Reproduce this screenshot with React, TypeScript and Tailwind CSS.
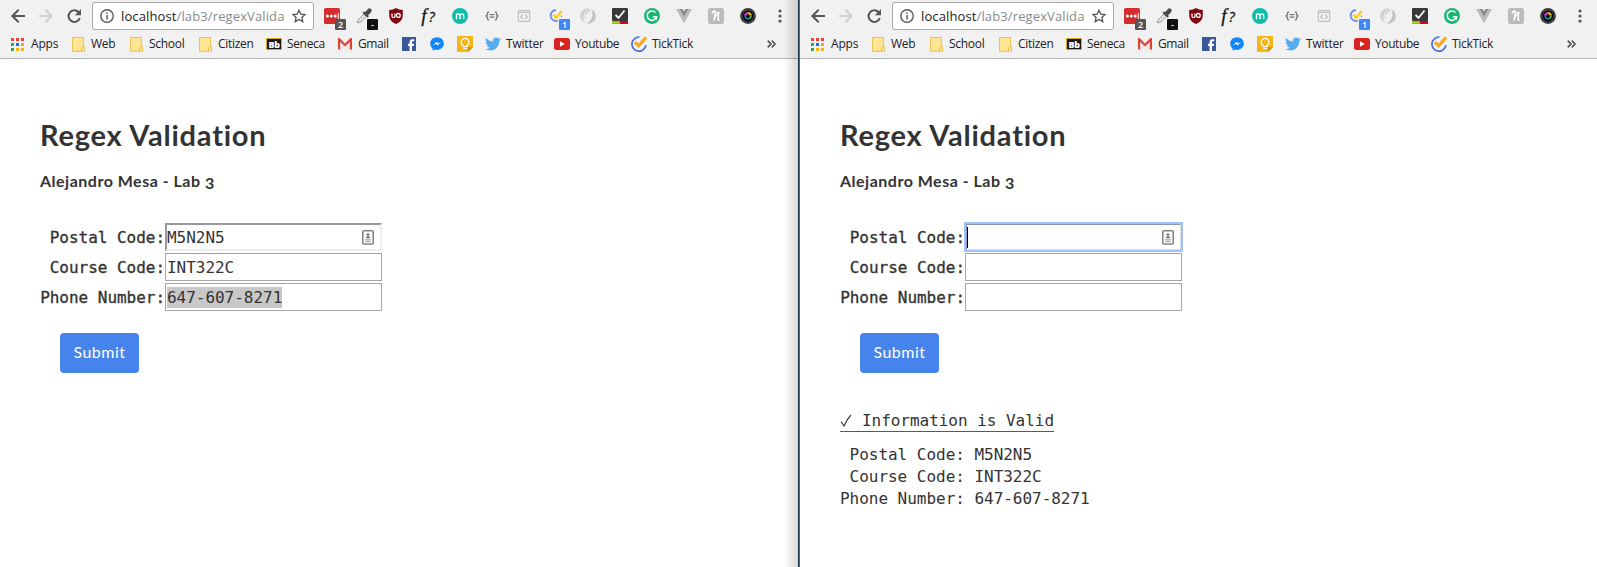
import type { ReactNode } from "react";
import { FaTwitter } from "react-icons/fa";

function BackArrow({ color }: { color: string }) {
  return (
    <svg width="14" height="14" viewBox="0 0 14 14" fill="none" stroke={color} strokeWidth="2">
      <path d="M14 7H1.8M7.6 .8L1.4 7l6.2 6.2" />
    </svg>
  );
}

function TickTickIcon() {
  return (
    <svg width="16" height="16" viewBox="0 0 16 16" fill="none">
      <path d="M8.5 1.2a7 7 0 1 0 6.4 8" stroke="#4c72e0" strokeWidth="1.8" />
      <path d="M4 6.2l3.6 3.6L15 1.6" stroke="#ffa414" strokeWidth="3" />
    </svg>
  );
}

function Badge({ text, color }: { text: string; color: string }) {
  return (
    <span className={`absolute left-[11px] top-[11px] flex h-[11px] w-[11px] items-center justify-center rounded-[1px] font-['Open_Sans',sans-serif] text-[9px] font-semibold leading-none text-white ${color}`}>
      {text}
    </span>
  );
}

function Ext({ children }: { children: ReactNode }) {
  return <span className="relative mr-4 flex h-4 w-4 shrink-0 items-center justify-center">{children}</span>;
}

function Extensions() {
  return (
    <>
      <Ext>
        <svg width="16" height="16">
          <rect width="16" height="16" rx="1.5" fill="#d32d2f" />
          <g fill="#fff"><circle cx="3.4" cy="8" r="1.5" /><circle cx="7.3" cy="8" r="1.5" /><circle cx="11.2" cy="8" r="1.5" /><rect x="13.7" y="5.2" width="1" height="5.6" /></g>
        </svg>
        <Badge text="2" color="bg-[#555]" />
      </Ext>
      <Ext>
        <svg width="16" height="16" fill="none">
          <path d="M1.2 14.8l1-3L9 5l2.4 2.4-6.8 6.8z" fill="#e2e2e2" stroke="#999" strokeWidth="1" />
          <path d="M7.2 4l5 5" stroke="#444" strokeWidth="2" />
          <path d="M10.6 5.7l2.8-3" stroke="#484848" strokeWidth="4.4" strokeLinecap="round" />
        </svg>
        <Badge text="-" color="bg-[#111]" />
      </Ext>
      <Ext>
        <svg width="16" height="16">
          <path d="M8 0c2 1.3 4.3 1.9 6.8 2v5c0 4.5-2.4 7-6.8 9-4.4-2-6.8-4.5-6.8-9V2C3.700 1.9 6 1.3 8 0z" fill="#800610" />
          <path d="M4 5.4v2.800q0 1.300 1.500 1.300T7 8.200V5.400" fill="none" stroke="#fff" strokeWidth="1.2" />
          <circle cx="10.3" cy="7.4" r="1.9" fill="none" stroke="#fff" strokeWidth="1.3" />
        </svg>
      </Ext>
      <Ext>
        <span className="whitespace-nowrap font-['Liberation_Serif',serif] text-[19px] italic leading-4 text-[#111] [-webkit-text-stroke:0.3px_#111]">
          f<span className="ml-0.5 font-['Open_Sans',sans-serif] text-[14px]">?</span>
        </span>
      </Ext>
      <Ext>
        <svg width="16" height="16" fill="none">
          <circle cx="8" cy="8" r="8" fill="#12bda8" />
          <path d="M4.5 11.200V5.400M4.500 7.800q0-2 1.800-2t1.800 2v3.400M8.100 7.800q0-2 1.800-2t1.800 2v3.400" stroke="#fff" strokeWidth="1.300" />
        </svg>
      </Ext>
      <Ext>
        <svg width="16" height="16" fill="none" stroke="#777" strokeWidth="1.3">
          <path d="M5 4q-1.600 0-1.600 1.400V7L2 8l1.400 1v1.600Q3.400 12 5 12M11 4q1.600 0 1.600 1.400V7L14 8l-1.400 1v1.600q0 1.400-1.600 1.400M5.500 6.700h5M5.500 9.200h5" />
        </svg>
      </Ext>
      <Ext>
        <svg width="16" height="16" fill="none" stroke="#c0c0c0" strokeWidth="1.2">
          <rect x="2.3" y="2.6" width="11.4" height="10.8" rx="1" />
          <path d="M2.300 4.300h11.400M6.900 6.500L4.800 8.700l2.100 2.200M9.100 6.500l2.100 2.200-2.100 2.200" />
        </svg>
      </Ext>
      <Ext>
        <svg width="16" height="16" fill="none">
          <path d="M8 2.200a5.400 5.400 0 1 0 2 10.400" stroke="#6487e2" strokeWidth="1.700" />
          <path d="M5 6.600l3 3L13.800 3" stroke="#ffcc18" strokeWidth="2.500" />
          <circle cx="13.500" cy="8.300" r=".8" fill="#6487e2" />
        </svg>
        <Badge text="1" color="bg-[#4285f4]" />
      </Ext>
      <Ext>
        <svg width="16" height="16">
          <path d="M9.600.3C4-.6-.2 3.500.2 8.300c.3 3.300 2.400 5.800 5.600 6.600C3.600 12.800 3 10.500 3.800 7.600 4.700 4.200 6.800 2 9.600.3z" fill="#d0d0d0" />
          <path d="M6.400 15.700c5.600.9 9.800-3.200 9.400-8-.3-3.300-2.400-5.800-5.600-6.600 2.200 2.100 2.800 4.400 2 7.300-.9 3.400-3 5.600-5.800 7.300z" fill="#c4c4c4" />
          <path d="M9.400 1.500C5.500 4 4.200 8 5.600 12c-.8-4 .6-7.300 4.400-9z" fill="#bdbdbd" />
        </svg>
      </Ext>
      <Ext>
        <svg width="16" height="16" fill="none">
          <rect width="16" height="13" rx="1" fill="#383838" />
          <path d="M0 13h8v3H0z" fill="#9fc713" /><path d="M8 13h8v3H8z" fill="#c50c1a" />
          <path d="M3.500 7l3 3 6-7.500" stroke="#fff" strokeWidth="1.800" />
        </svg>
      </Ext>
      <Ext>
        <svg width="16" height="16" fill="none">
          <circle cx="8" cy="8" r="8" fill="#18b573" />
          <path d="M11.500 4.600A4.700 4.700 0 1 0 12.500 8.700H8.800" stroke="#fff" strokeWidth="1.600" />
          <path d="M12.300 8.700v3" stroke="#fff" strokeWidth="1.200" />
        </svg>
      </Ext>
      <Ext>
        <svg width="16" height="16">
          <path d="M0 1h3.600L8 8.700 12.400 1H16L8 15z" fill="#b9b9b9" />
          <path d="M3.600 1H6.500L8 3.600 9.500 1h2.900L8 8.700z" fill="#898989" />
        </svg>
      </Ext>
      <Ext>
        <svg width="16" height="16" fill="none">
          <rect width="16" height="16" rx="2.500" fill="#bcbcbc" />
          <path d="M4.200 5.600Q4.800 3 6.600 3q1 0 .8 1.600L6 12.600M6.700 9.300Q7.900 7 9.400 7q1.300 0 1 1.500l-.5 2.600q-.2 1.400 1.900.8M8.600 5.200h3M10.600 3.600L10 6" stroke="#fff" strokeWidth="1.500" />
        </svg>
      </Ext>
      <Ext>
        <svg width="16" height="16" fill="none">
          <circle cx="8" cy="8" r="7.900" fill="#3a3d40" />
          <circle cx="8" cy="8" r="5.400" fill="#050505" />
          <path d="M5.200 7.800A2.900 2.900 0 0 1 8 5.200" stroke="#d638cb" strokeWidth="2.200" />
          <path d="M8 5.200a2.900 2.900 0 0 1 2.800 2.300" stroke="#f2ad16" strokeWidth="2.200" />
          <path d="M10.800 7.500A2.900 2.900 0 0 1 9 10.700" stroke="#39b54a" strokeWidth="1.800" />
          <path d="M9 10.700A2.900 2.900 0 0 1 5.200 8" stroke="#1696df" strokeWidth="1.400" />
        </svg>
      </Ext>
    </>
  );
}

function Folder() {
  return (
    <svg width="13" height="15">
      <path d="M.5.500h11v9h1v4.800H.5z" fill="#ffe592" stroke="#e6c558" />
      <path d="M9.600 14V10.600q0-1 1.500-1" fill="none" stroke="#e6c558" />
    </svg>
  );
}

function Mark({ width, gap, tracking, icon, label }: { width: string; gap: string; tracking?: string; icon: ReactNode; label?: string }) {
  return (
    <div className={`flex h-5 shrink-0 items-center whitespace-nowrap ${width} ${gap} ${tracking ?? ""}`}>
      {icon}
      {label && <span>{label}</span>}
    </div>
  );
}

function Bookmarks() {
  return (
    <nav className="flex h-6 items-center pl-[11px] font-['Open_Sans',sans-serif] text-[12px] leading-5 text-[#222]">
      <Mark width="w-[61px]" gap="gap-[7px]" tracking="tracking-[-0.2px]" label="Apps" icon={
        <svg width="13" height="13">
          <path d="M0 0h3v3H0zM5 0h3v3H5zM10 0h3v3h-3z" fill="#ea4335" />
          <path d="M0 5h3v3H0zM0 10h3v3H0z" fill="#2fa35b" />
          <path d="M5 5h3v3H5z" fill="#1a73e8" />
          <path d="M10 5h3v3h-3zM5 10h3v3H5zM10 10h3v3h-3z" fill="#fbad08" />
        </svg>
      } />
      <Mark width="w-[58px]" gap="gap-[6px]" tracking="tracking-[-0.3px]" icon={<Folder />} label="Web" />
      <Mark width="w-[69px]" gap="gap-[6px]" tracking="tracking-[-0.3px]" icon={<Folder />} label="School" />
      <Mark width="w-[67px]" gap="gap-[6px]" tracking="tracking-[-0.3px]" icon={<Folder />} label="Citizen" />
      <Mark width="w-[72px]" gap="gap-[5px]" tracking="tracking-[-0.35px]" label="Seneca" icon={
        <span className="flex h-3 w-4 items-center justify-center border border-[#dfa91f] bg-[#161616] text-[9px] font-extrabold leading-none text-white">Bb</span>
      } />
      <Mark width="w-[64px]" gap="gap-[6px]" tracking="tracking-[-0.4px]" label="Gmail" icon={
        <svg width="14" height="12" fill="none">
          <path d="M0 0h14v11.500H0z" fill="#f0eeee" />
          <path d="M2.500 11L7 6.500l4.500 4.500" stroke="#d6d3d3" />
          <path d="M1.100 11.500V1.200L7 7l5.900-5.800v10.300" stroke="#db4437" strokeWidth="2.200" />
        </svg>
      } />
      <Mark width="w-[28px]" gap="gap-0" icon={
        <svg width="14" height="14"><path d="M0 0h14v14H0z" fill="#3b5998" /><path d="M7.600 14V8.900H6V6.700h1.600V5.100C7.600 3.200 8.600 2.200 10.500 2.200h1.700v2.100h-1.100c-.9 0-1.100.4-1.100 1.100v1.300h2.100l-.3 2.200H10V14z" fill="#fff" /></svg>
      } />
      <Mark width="w-[27px]" gap="gap-0" icon={
        <svg width="14" height="14"><path d="M7 .2C3.100.2.200 3 .2 6.600c0 2.100.9 3.800 2.400 5v2.200l2.200-1.200c.7.200 1.400.3 2.200.3 3.900 0 6.800-2.700 6.800-6.300S10.900.2 7 .2z" fill="#1185ff" /><path d="M2.900 8.500L6.400 4.800l1.800 1.800 3-1.800-3.500 3.700-1.800-1.700z" fill="#fff" /></svg>
      } />
      <Mark width="w-[28px]" gap="gap-0" icon={
        <svg width="16" height="16" fill="none"><path d="M0 0h16v11l-5 5H0z" fill="#f5b713" /><path d="M16 11h-5v5z" fill="#dc8f00" /><path d="M6 9.600q-2-1.400-2-3.300A4 4 0 0 1 12 6.300Q12 8.200 10 9.600V10.500H6z" stroke="#fff" strokeWidth="1.200" /><path d="M6 12.500h4" stroke="#fff" strokeWidth="1.300" /></svg>
      } />
      <Mark width="w-[69px]" gap="gap-[5px]" tracking="tracking-[-0.2px]" icon={<FaTwitter size={16} color="#55acee" />} label="Twitter" />
      <Mark width="w-[77px]" gap="gap-[5px]" tracking="tracking-[-0.4px]" label="Youtube" icon={
        <svg width="16" height="12"><rect width="16" height="12" rx="2.500" fill="#d92323" /><path d="M6 3.300v5.400L10.700 6z" fill="#fff" /></svg>
      } />
      <Mark width="w-[136px]" gap="gap-[5px]" tracking="tracking-[-0.3px]" icon={<TickTickIcon />} label="TickTick" />
      <svg width="9" height="8" fill="none" stroke="#555" strokeWidth="1.700"><path d="M.7.700L4 4 .7 7.300M4.800.700L8.100 4 4.800 7.300" /></svg>
    </nav>
  );
}

function Toolbar() {
  return (
    <header className="h-[59px] border-b border-[#b3b3b3] bg-[#f1f1f1]">
      <div className="flex h-8 items-center pl-[11px]">
        <div className="flex w-[81px] items-center gap-[14px]">
          <BackArrow color="#555" />
          <span className="rotate-180"><BackArrow color="#d0d0d0" /></span>
          <svg width="15" height="15" viewBox="0 0 15 15" fill="none">
            <path d="M12.800 9.200A5.800 5.800 0 1 1 11.600 3.200" stroke="#555" strokeWidth="2" />
            <path d="M14 0v6.200H7.800z" fill="#555" />
          </svg>
        </div>
        <div className="flex h-[28px] w-[222px] shrink-0 items-center rounded-[3px] border border-[#a8a8a8] bg-white pl-[7px]">
          <svg width="14" height="14" fill="none">
            <circle cx="7" cy="7" r="6.200" stroke="#5a5a5a" strokeWidth="1.400" />
            <path d="M6.300 6h1.500v4.600H6.300zM6.300 3.300h1.500v1.500H6.300z" fill="#5a5a5a" />
          </svg>
          <span className="ml-[7px] w-[171px] whitespace-nowrap font-['Open_Sans',sans-serif] text-[13px] leading-5 tracking-[0.12px] text-[#8a8a8a]">
            <span className="text-[#222]">localhost</span>/lab3/regexValida
          </span>
          <svg width="14" height="14" viewBox="0 0 14 14" fill="none" stroke="#555" strokeWidth="1.300">
            <path d="M7 1.200l1.800 3.900 4.300.4-3.200 2.900.9 4.200L7 10.400l-3.800 2.200.9-4.200L.9 5.500l4.300-.4z" />
          </svg>
        </div>
        <div className="ml-[10px] flex items-center">
          <Extensions />
          <svg width="4" height="14" className="ml-[6px]" fill="#555"><circle cx="2" cy="2" r="1.600" /><circle cx="2" cy="7" r="1.600" /><circle cx="2" cy="12" r="1.600" /></svg>
        </div>
      </div>
      <Bookmarks />
    </header>
  );
}

function ContactIcon() {
  return (
    <svg width="12" height="15" fill="none">
      <rect x=".8" y=".8" width="10.400" height="13.200" rx="1" stroke="#858585" strokeWidth="1.600" />
      <circle cx="6" cy="4.700" r="1.400" fill="#777" />
      <path d="M3.600 8.300q0-2 2.400-2t2.400 2z" fill="#777" />
      <path d="M3.300 9.800h5.400M3.300 11.600h5.400" stroke="#999" />
    </svg>
  );
}

const plainField = "border border-[#a5a5a5]";
const insetField = "border-2 border-t-[#999] border-l-[#999] border-r-[#eee] border-b-[#eee]";
const focusedField = "border-2 border-t-[#8597b4] border-l-[#8597b4] border-r-[#ddd] border-b-[#ddd] outline-2 -outline-offset-1 outline-[#9fc3fa]";

function Row({ label, box, pad, children }: { label: string; box: string; pad: string; children?: ReactNode }) {
  return (
    <div className="flex h-[28px]">
      <label className="w-[125px] whitespace-pre pt-px text-right leading-[28px] [-webkit-text-stroke:0.32px_#333]">{label}</label>
      <div className={`flex w-[217px] items-center bg-white ${box} ${pad}`}>{children}</div>
    </div>
  );
}

function Page({ submitted }: { submitted: boolean }) {
  return (
    <main className="pl-10 pt-[55px] text-[#333]">
      <h1 className="h-[42px] font-['Lato',sans-serif] text-[29px] font-bold leading-[41px] tracking-[0.78px]">Regex Validation</h1>
      <h2 className="mt-[13px] h-6 font-['Lato',sans-serif] text-[16px] font-bold leading-6 tracking-[0.5px]">
        Alejandro Mesa - Lab <span className="inline-block translate-y-[2px]">3</span>
      </h2>
      <form className="mt-[30px] flex flex-col gap-[2px] font-['DejaVu_Sans_Mono',monospace] text-[16px] tracking-[-0.03px]">
        <Row label="Postal Code:" box={submitted ? focusedField : insetField} pad="justify-between pr-[6px]">
          {submitted ? <span className="h-[21px] w-px bg-black" /> : <span className="pt-0.5">M5N2N5</span>}
          <ContactIcon />
        </Row>
        <Row label="Course Code:" box={plainField} pad="pl-px">{!submitted && <span className="pt-0.5">INT322C</span>}</Row>
        <Row label="Phone Number:" box={plainField} pad="pl-px">
          {!submitted && <span className="h-[21px] bg-[#c8c8c8] leading-[22px]">647-607-8271</span>}
        </Row>
        <button type="button" className="ml-5 mt-5 h-10 w-[79px] rounded-[4px] bg-[#4683ed] pb-0.5 font-['Lato',sans-serif] text-[16px] tracking-[0.5px] text-white">Submit</button>
      </form>
      {submitted && (
        <section className="font-['DejaVu_Sans_Mono',monospace] text-[16px] leading-[22px] tracking-[-0.03px]">
          <p className="mt-[36px] flex h-[23px] w-[214px] whitespace-nowrap border-b border-[#138a13] leading-6">
            <span className="w-[22px]">
              <svg width="12" height="22" fill="none" stroke="#333" strokeWidth="1.100"><path d="M1 12.500l3 4.500Q7 10 11 6" /></svg>
            </span>
            Information is Valid
          </p>
          <pre className="mt-3 font-['DejaVu_Sans_Mono',monospace]">{" Postal Code: M5N2N5\n Course Code: INT322C\nPhone Number: 647-607-8271"}</pre>
        </section>
      )}
    </main>
  );
}

export default function App() {
  return (
    <div className="flex h-[567px] w-[1597px] overflow-hidden bg-white">
      <div className="relative w-[798px] shrink-0 overflow-hidden">
        <Toolbar />
        <Page submitted={false} />
        <div className="absolute inset-y-0 right-0 w-[14px] bg-linear-to-r from-transparent to-black/15" />
      </div>
      <div className="w-[2px] shrink-0 border-l border-[#243b50] bg-[#1674bd]" />
      <div className="w-[797px] shrink-0 overflow-hidden">
        <Toolbar />
        <Page submitted />
      </div>
    </div>
  );
}
